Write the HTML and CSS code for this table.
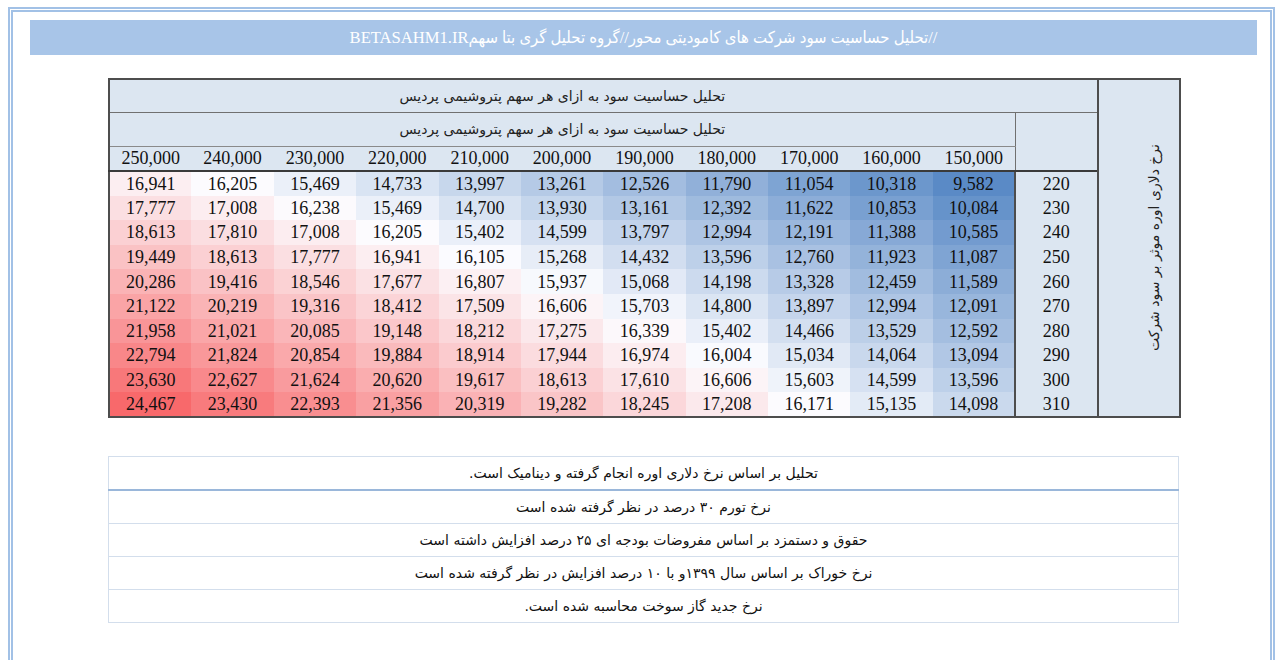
FILE: index.html
```html
<!DOCTYPE html>
<html lang="fa">
<head>
<meta charset="utf-8">
<title>تحلیل حساسیت سود</title>
<link rel="stylesheet" href="styles.css">
</head>
<body>
<div class="frame">
  <div class="banner" dir="rtl">//تحلیل حساسیت سود شرکت های کامودیتی محور//گروه تحلیل گری بتا سهمBETASAHM1.IR</div>

  <table class="sens">
    <colgroup>
      <col><col><col><col><col><col><col><col><col><col><col><col><col>
    </colgroup>
    <tr class="h1">
      <td colspan="12" class="title1"><span dir="rtl">تحلیل حساسیت سود به ازای هر سهم پتروشیمی پردیس</span></td>
      <td rowspan="13" class="vert"><div class="vtext" dir="rtl">نرخ دلاری اوره موثر بر سود شرکت</div></td>
    </tr>
    <tr class="h2">
      <td colspan="11" class="title2"><span dir="rtl">تحلیل حساسیت سود به ازای هر سهم پتروشیمی پردیس</span></td>
      <td rowspan="2" class="blank"></td>
    </tr>
    <tr class="h3">
      <th>250,000</th><th>240,000</th><th>230,000</th><th>220,000</th><th>210,000</th><th>200,000</th><th>190,000</th><th>180,000</th><th>170,000</th><th>160,000</th><th>150,000</th>
    </tr>
    <tr class="row"><td class="v">16,941</td><td class="v">16,205</td><td class="v">15,469</td><td class="v">14,733</td><td class="v">13,997</td><td class="v">13,261</td><td class="v">12,526</td><td class="v">11,790</td><td class="v">11,054</td><td class="v">10,318</td><td class="v">9,582</td><td class="lbl">220</td></tr>
    <tr class="row"><td class="v">17,777</td><td class="v">17,008</td><td class="v">16,238</td><td class="v">15,469</td><td class="v">14,700</td><td class="v">13,930</td><td class="v">13,161</td><td class="v">12,392</td><td class="v">11,622</td><td class="v">10,853</td><td class="v">10,084</td><td class="lbl">230</td></tr>
    <tr class="row"><td class="v">18,613</td><td class="v">17,810</td><td class="v">17,008</td><td class="v">16,205</td><td class="v">15,402</td><td class="v">14,599</td><td class="v">13,797</td><td class="v">12,994</td><td class="v">12,191</td><td class="v">11,388</td><td class="v">10,585</td><td class="lbl">240</td></tr>
    <tr class="row"><td class="v">19,449</td><td class="v">18,613</td><td class="v">17,777</td><td class="v">16,941</td><td class="v">16,105</td><td class="v">15,268</td><td class="v">14,432</td><td class="v">13,596</td><td class="v">12,760</td><td class="v">11,923</td><td class="v">11,087</td><td class="lbl">250</td></tr>
    <tr class="row"><td class="v">20,286</td><td class="v">19,416</td><td class="v">18,546</td><td class="v">17,677</td><td class="v">16,807</td><td class="v">15,937</td><td class="v">15,068</td><td class="v">14,198</td><td class="v">13,328</td><td class="v">12,459</td><td class="v">11,589</td><td class="lbl">260</td></tr>
    <tr class="row"><td class="v">21,122</td><td class="v">20,219</td><td class="v">19,316</td><td class="v">18,412</td><td class="v">17,509</td><td class="v">16,606</td><td class="v">15,703</td><td class="v">14,800</td><td class="v">13,897</td><td class="v">12,994</td><td class="v">12,091</td><td class="lbl">270</td></tr>
    <tr class="row"><td class="v">21,958</td><td class="v">21,021</td><td class="v">20,085</td><td class="v">19,148</td><td class="v">18,212</td><td class="v">17,275</td><td class="v">16,339</td><td class="v">15,402</td><td class="v">14,466</td><td class="v">13,529</td><td class="v">12,592</td><td class="lbl">280</td></tr>
    <tr class="row"><td class="v">22,794</td><td class="v">21,824</td><td class="v">20,854</td><td class="v">19,884</td><td class="v">18,914</td><td class="v">17,944</td><td class="v">16,974</td><td class="v">16,004</td><td class="v">15,034</td><td class="v">14,064</td><td class="v">13,094</td><td class="lbl">290</td></tr>
    <tr class="row"><td class="v">23,630</td><td class="v">22,627</td><td class="v">21,624</td><td class="v">20,620</td><td class="v">19,617</td><td class="v">18,613</td><td class="v">17,610</td><td class="v">16,606</td><td class="v">15,603</td><td class="v">14,599</td><td class="v">13,596</td><td class="lbl">300</td></tr>
    <tr class="row"><td class="v">24,467</td><td class="v">23,430</td><td class="v">22,393</td><td class="v">21,356</td><td class="v">20,319</td><td class="v">19,282</td><td class="v">18,245</td><td class="v">17,208</td><td class="v">16,171</td><td class="v">15,135</td><td class="v">14,098</td><td class="lbl">310</td></tr>
  </table>

  <table class="notes" dir="rtl">
    <tr class="first"><td>تحلیل بر اساس نرخ دلاری اوره انجام گرفته و دینامیک است.</td></tr>
    <tr><td>نرخ تورم ۳۰ درصد در نظر گرفته شده است</td></tr>
    <tr><td>حقوق و دستمزد بر اساس مفروضات بودجه ای ۲۵ درصد افزایش داشته است</td></tr>
    <tr><td>نرخ خوراک بر اساس سال ۱۳۹۹و با ۱۰ درصد افزایش در نظر گرفته شده است</td></tr>
    <tr><td>نرخ جدید گاز سوخت محاسبه شده است.</td></tr>
  </table>
</div>
<script src="script.js"></script>
</body>
</html>
```

FILE: styles.css
```css
html, body {
  margin: 0;
  height: 100%;
  overflow: hidden;
  background: #ffffff;
}

body {
  font-family: "DejaVu Sans", sans-serif;
  color: #111;
}

.frame {
  box-sizing: border-box;
  margin: 7px 0 0 8px;
  width: 1267px;
  height: 653px;
  border: 5px double #a2c1e6;
  border-bottom: none;
  padding: 8px 13px 0 17px;
}

.banner {
  height: 35px;
  background: #a8c5e8;
  color: #ffffff;
  display: flex;
  align-items: center;
  justify-content: center;
  font-family: "Liberation Serif", "DejaVu Sans Condensed", "DejaVu Sans", serif;
  font-stretch: condensed;
  font-size: 16.6px;
}

.sens {
  margin: 23px 0 0 78px;
  width: 1071px;
  table-layout: fixed;
  border-collapse: collapse;
  border: 2px solid #4d4d4d;
}

.sens col {
  width: 82.38px;
}

.sens td,
.sens th {
  padding: 0;
  text-align: center;
  vertical-align: middle;
  font-weight: normal;
}

.title1,
.title2 {
  background: #dce6f1;
  font-size: 14px;
  color: #222;
}

.title1 {
  padding-right: 82px !important;
  border-bottom: 1px solid #707070;
}

.title2 {
  border-bottom: 1px solid #8a8a8a;
}

.h1 { height: 33px; }
.h2 { height: 34px; }
.h3 { height: 25px; }
.row { height: 24.6px; }

.h3 th {
  background: #dce6f1;
  font-family: "Liberation Serif", serif;
  font-size: 18px;
  line-height: 1;
  border-bottom: 2px solid #3a3a3a;
}

.blank {
  background: #dce6f1;
  border-left: 1px solid #707070;
  border-bottom: 2px solid #3a3a3a;
}

.v {
  font-family: "Liberation Serif", serif;
  font-size: 18px;
  line-height: 1;
  color: #111;
}

.lbl {
  background: #dce6f1;
  font-family: "Liberation Serif", serif;
  font-size: 18px;
  line-height: 1;
  border-left: 2px solid #4d4d4d;
}

.vert {
  background: #dce6f1;
  border-left: 2px solid #4d4d4d;
}

.vtext {
  display: flex;
  align-items: center;
  justify-content: center;
  margin-left: 47px;
  writing-mode: vertical-rl;
  transform: rotate(180deg);
  font-size: 14px;
  color: #222;
}

.notes {
  margin: 38px 0 0 78px;
  width: 1071px;
  border-collapse: collapse;
  border: 1px solid #d3deec;
}

.notes td {
  height: 32px;
  padding: 0;
  text-align: center;
  font-size: 14px;
  color: #111;
  border-bottom: 1px solid #d3deec;
}

.notes .first td {
  border-bottom: 2px solid #9ab7da;
}
```

FILE: script.js
```js
(function () {
  var cells = Array.prototype.slice.call(document.querySelectorAll('.sens td.v'));
  var vals = cells.map(function (td) {
    return parseFloat(td.textContent.replace(/,/g, ''));
  });
  var sorted = vals.slice().sort(function (a, b) { return a - b; });
  var min = sorted[0];
  var max = sorted[sorted.length - 1];
  var n = sorted.length;
  var mid = n % 2 ? sorted[(n - 1) / 2] : (sorted[n / 2 - 1] + sorted[n / 2]) / 2;
  var blue = [90, 138, 198];
  var white = [252, 252, 255];
  var red = [248, 105, 107];
  function mix(a, b, t) {
    return a.map(function (x, i) { return Math.round(x + (b[i] - x) * t); });
  }
  cells.forEach(function (td, i) {
    var v = vals[i];
    var c = v <= mid ? mix(blue, white, (v - min) / (mid - min)) : mix(white, red, (v - mid) / (max - mid));
    td.style.backgroundColor = 'rgb(' + c.join(',') + ')';
  });
})();
```
